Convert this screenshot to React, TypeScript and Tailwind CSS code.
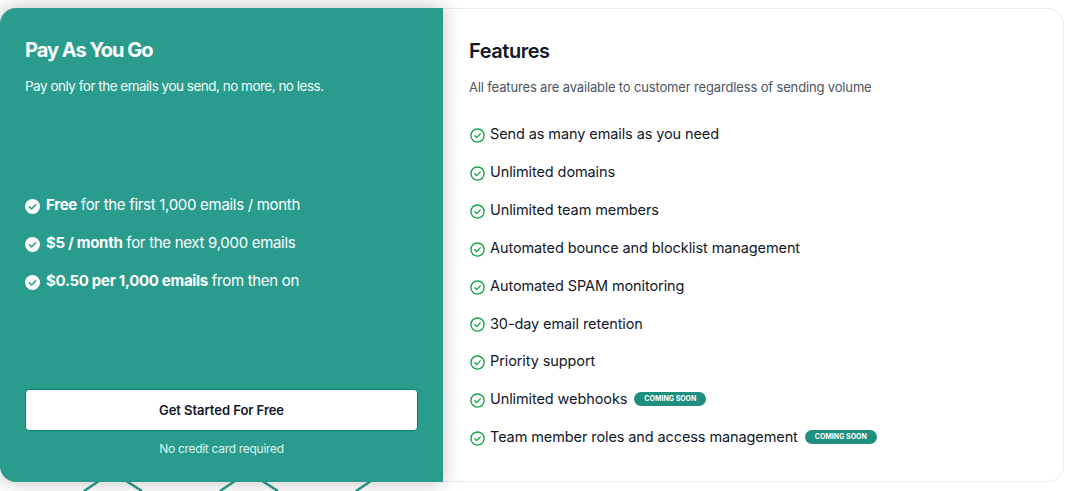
import React from 'react';

const features: { label: string; soon?: boolean }[] = [
    { label: 'Send as many emails as you need' },
    { label: 'Unlimited domains' },
    { label: 'Unlimited team members' },
    { label: 'Automated bounce and blocklist management' },
    { label: 'Automated SPAM monitoring' },
    { label: '30-day email retention' },
    { label: 'Priority support' },
    { label: 'Unlimited webhooks', soon: true },
    { label: 'Team member roles and access management', soon: true },
];

const pricing: { bold: string; rest: string }[] = [
    { bold: 'Free', rest: ' for the first 1,000 emails / month' },
    { bold: '$5 / month', rest: ' for the next 9,000 emails' },
    { bold: '$0.50 per 1,000 emails', rest: ' from then on' },
];

const SolidCheck = () => (
    <svg width="15" height="15" viewBox="0 0 20 20" className="shrink-0 mt-[2px]">
        <circle cx="10" cy="10" r="10" fill="#ffffff" />
        <path d="M6 10.5l2.8 2.8L14.2 7.6" fill="none" stroke="#2a9c8e" strokeWidth="2" strokeLinecap="round" strokeLinejoin="round" />
    </svg>
);

const OutlineCheck = () => (
    <svg width="15" height="15" viewBox="0 0 24 24" className="shrink-0 mt-[3px] ml-px" fill="none" stroke="#16a34a" strokeWidth="2.2" strokeLinecap="round" strokeLinejoin="round">
        <circle cx="12" cy="12" r="10.5" />
        <path d="M7.8 12.4l3 3 5.6-6" />
    </svg>
);

export default function App() {
    return (
        <div className="relative w-[1070px] h-[491px] overflow-hidden bg-white font-['Inter',sans-serif] pt-2 pr-[6px]">
            {/* lattice peeking out under the card */}
            <svg className="absolute left-0 bottom-0" width="443" height="12" viewBox="0 0 443 12" fill="none" stroke="#2a9c8e" strokeWidth="2.5">
                <path d="M102 0L84 12M123 0L142 12M238 0L220 12M259 0L278 12M374 0L356 12" />
            </svg>
            <div className="relative flex h-[474px] rounded-2xl border border-[#ececec] bg-white">
                <div className="w-[443px] -my-px -ml-px shrink-0 rounded-l-2xl bg-[#2a9c8e] px-[25px] pt-[28px] pb-[25px] flex flex-col text-white shadow-[0_0_20px_rgba(0,0,0,0.25)]">
                    <h2 className="text-[20px] leading-7 font-bold tracking-[-1px]">Pay As You Go</h2>
                    <p className="mt-[12px] text-[13.5px] leading-5 tracking-[-0.5px] text-[#f2fbf9]">Pay only for the emails you send, no more, no less.</p>
                    <ul className="mt-[97px] flex flex-col gap-[14px]">
                        {pricing.map((row) => (
                            <li key={row.bold} className="flex gap-[6px] text-[15px] leading-[24px] tracking-[-0.3px] items-center">
                                <SolidCheck />
                                <span><b className="font-bold">{row.bold}</b>{row.rest}</span>
                            </li>
                        ))}
                    </ul>
                    <div className="mt-auto">
                        <button className="w-full h-[42px] pt-px rounded-[4px] border border-[#0b7d6e] bg-white text-[13px] font-semibold tracking-[-0.05px] text-[#111827]">Get Started For Free</button>
                        <p className="mt-[10px] text-center text-[12px] leading-4 tracking-[-0.3px] text-[#d9f5ee]">No credit card required</p>
                    </div>
                </div>
                <div className="flex-1 pl-[26px] pt-[28px]">
                    <h2 className="text-[20px] leading-7 font-semibold tracking-[-0.45px] text-[#111827]">Features</h2>
                    <p className="mt-[12px] text-[13px] leading-5 tracking-[-0.15px] text-[#4b5563]">All features are available to customer regardless of sending volume</p>
                    <ul className="mt-[18px] flex flex-col">
                        {features.map((f) => (
                            <li key={f.label} className="flex h-[37.9px] items-center gap-[5px] text-[14.5px] tracking-[-0.1px] text-[#111827]">
                                <OutlineCheck />
                                <span>{f.label}</span>
                                {f.soon && (
                                    <span className="ml-[2px] rounded-full bg-[#1f8f7f] px-[10px] h-[14px] leading-[14px] text-[7px] font-bold tracking-[0px] text-white">COMING SOON</span>
                                )}
                            </li>
                        ))}
                    </ul>
                </div>
            </div>
        </div>
    );
}
